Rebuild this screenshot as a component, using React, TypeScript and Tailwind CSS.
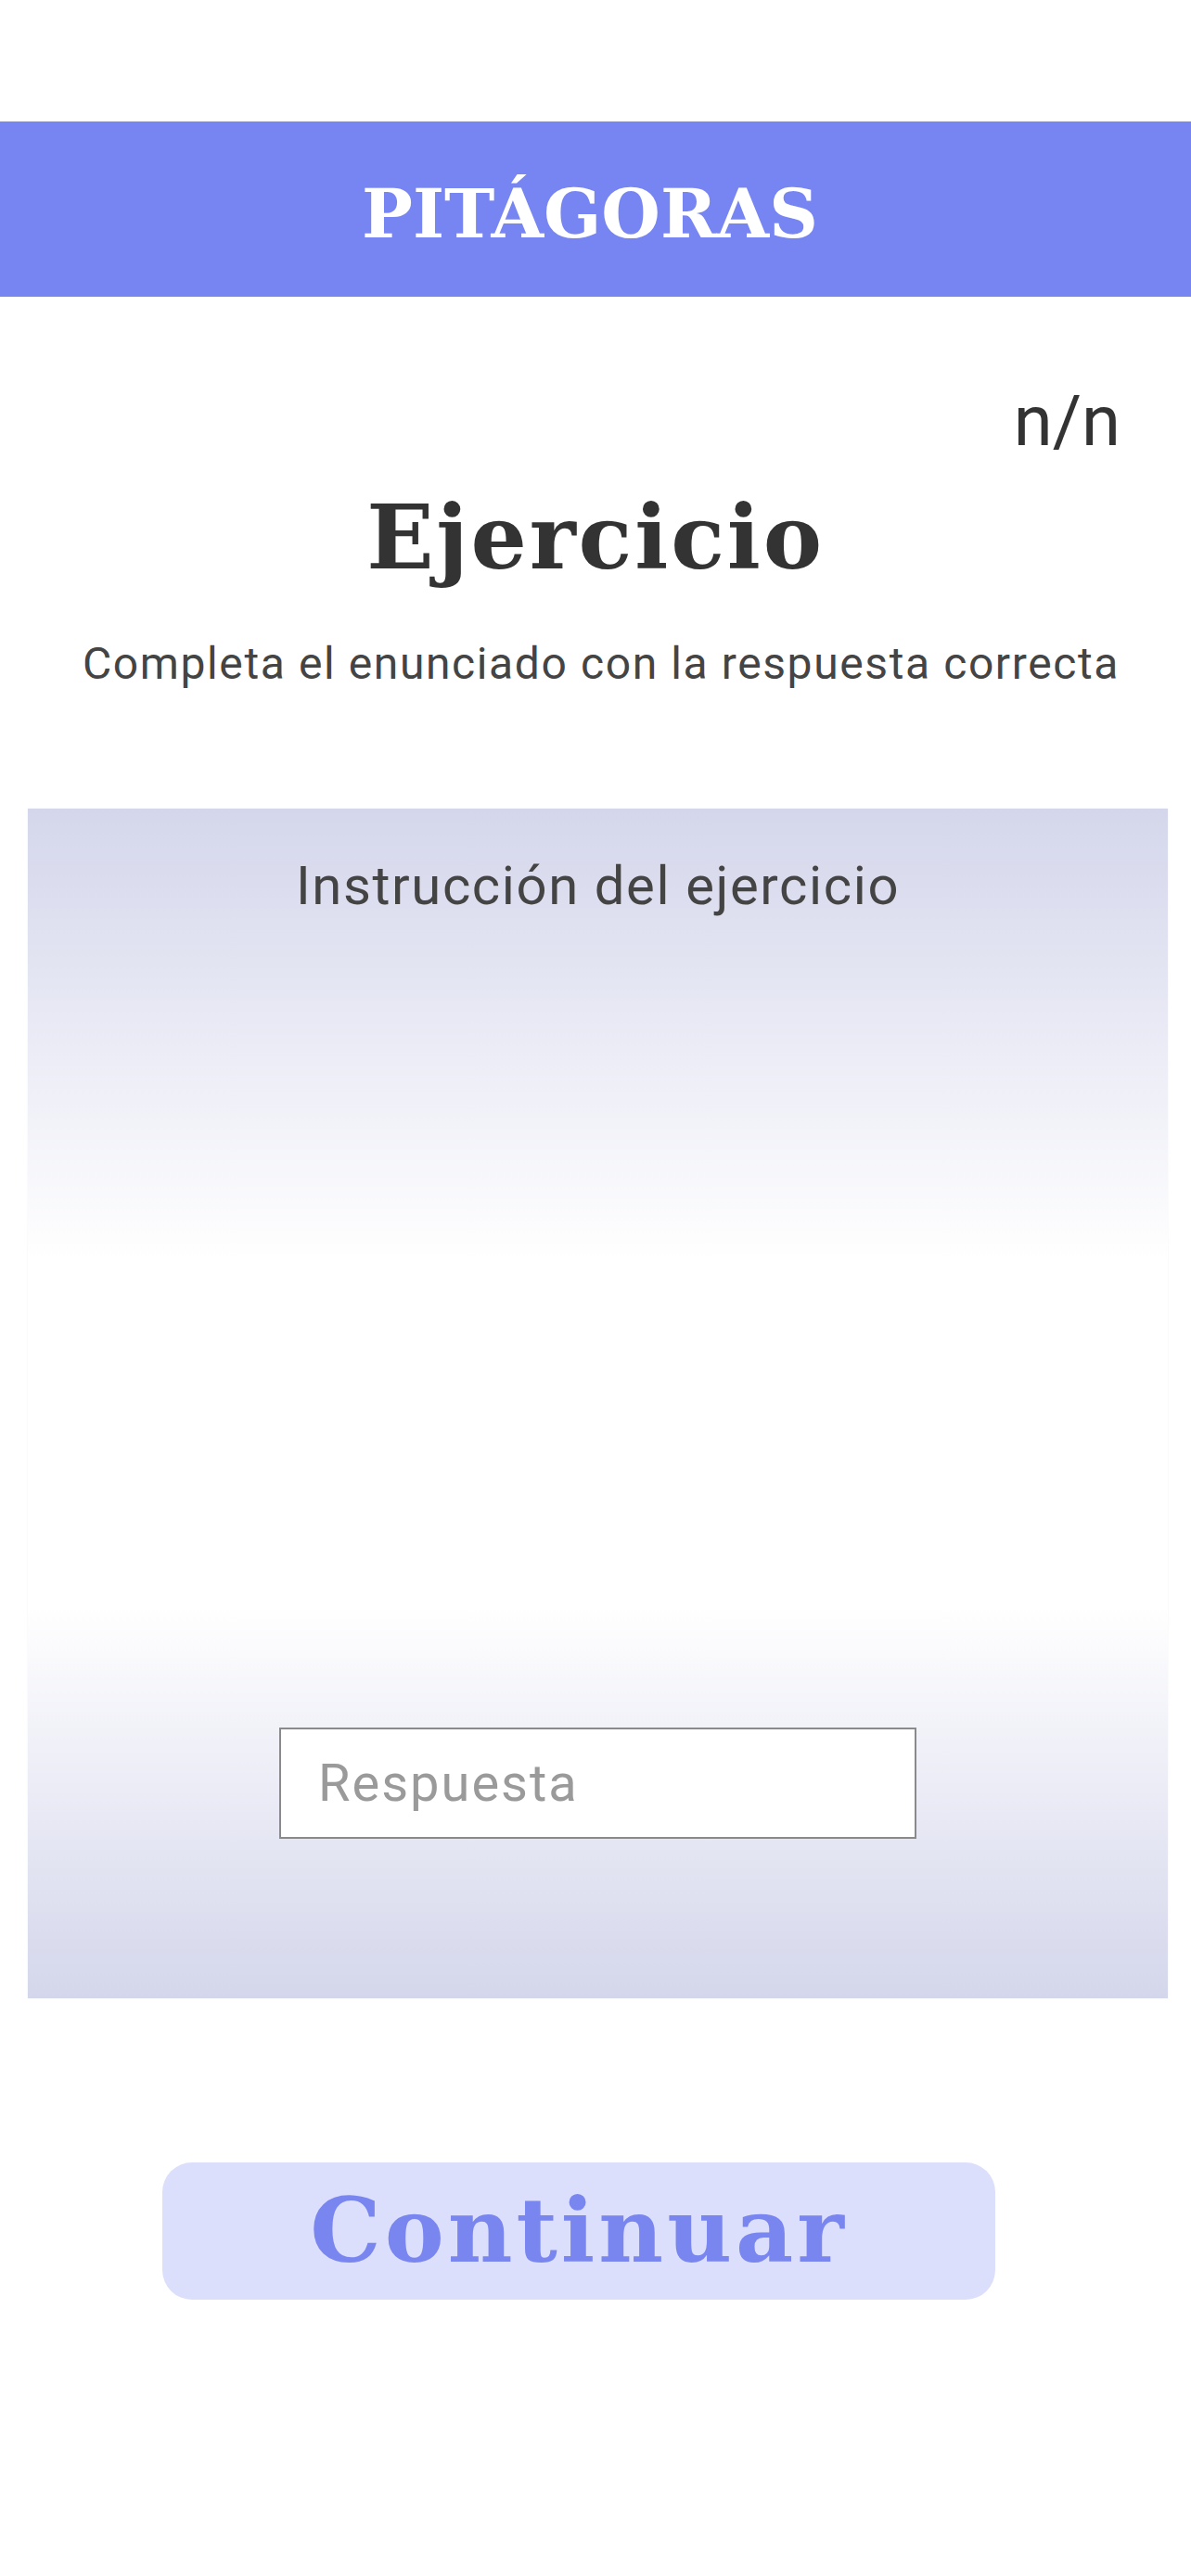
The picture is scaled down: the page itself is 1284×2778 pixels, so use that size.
const slab = "font-['DejaVu_Serif',serif] font-bold";
const sans = "font-['Roboto',sans-serif]";

const App = () => {
  return (
    <div className="min-h-[2778px] w-full bg-white pt-[131px]">
      <header className="h-[189px] w-full bg-[#7785f2] flex items-center justify-center pt-[10px] pr-[12px]">
        <h1 className={`${slab} text-[73px] leading-none text-white`}>PITÁGORAS</h1>
      </header>

      <div className="px-[76px]">
        <p className={`${sans} mt-[96px] text-right text-[76px] leading-none text-[#333333]`}>n/n</p>
        <h2 className={`${slab} mt-[40px] text-center text-[95px] leading-none tracking-[2.8px] text-[#333333]`}>
          Ejercicio
        </h2>
        <p className={`${sans} mt-[65px] pl-[12px] text-center text-[48px] leading-none tracking-[1.6px] text-[#444444]`}>
          Completa el enunciado con la respuesta correcta
        </p>
      </div>

      <section className="ml-[30px] mr-[25px] mt-[132px] h-[1283px] flex flex-col items-center bg-[linear-gradient(to_bottom,#d4d6eb_0%,#ffffff_38%,#ffffff_67%,#d4d6eb_100%)] pt-[54px] pb-[172px] shadow-[0_0_2px_rgba(0,0,0,0.06)]">
        <p className={`${sans} text-[58px] leading-none tracking-[1.6px] text-[#444444]`}>Instrucción del ejercicio</p>
        <div className="flex-1" />
        <input
          type="text"
          placeholder="Respuesta"
          className={`${sans} h-[120px] w-[687px] border-2 border-[#8a8a8a] bg-white px-[40px] text-[56px] tracking-[2px] text-[#333] placeholder:text-[#9a9a9a] focus:outline-none`}
        />
      </section>

      <div className="mt-[177px] flex pl-[175px]">
        <button
          type="button"
          className="h-[148px] w-[898px] rounded-[32px] bg-[#dcdffb] flex items-center justify-center"
        >
          <span className={`${slab} text-[96px] leading-none tracking-[4px] text-[#7a86f0]`}>Continuar</span>
        </button>
      </div>
    </div>
  );
};

export default App;
